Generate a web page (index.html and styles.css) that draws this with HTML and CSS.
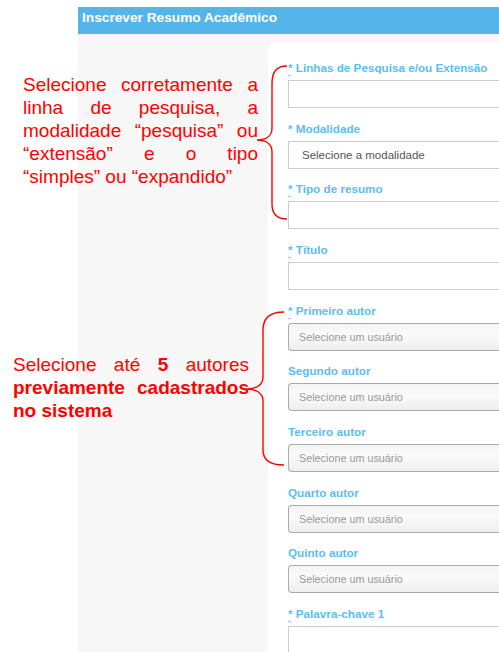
FILE: index.html
```html
<!DOCTYPE html>
<html lang="pt-BR">
<head>
  <meta charset="UTF-8">
  <title>Inscrever Resumo Acadêmico</title>
  <link rel="stylesheet" href="styles.css">
</head>
<body>
  <div class="page">
    <div class="panel-heading">Inscrever Resumo Acadêmico</div>
    <div class="panel-body">
      <form class="card">
        <div class="field">
          <label><abbr title="obrigatório">*</abbr> Linhas de Pesquisa e/ou Extensão</label>
          <div class="input"></div>
        </div>
        <div class="field">
          <label><span class="star">*</span> Modalidade</label>
          <div class="input select">Selecione a modalidade</div>
        </div>
        <div class="field">
          <label><abbr title="obrigatório">*</abbr> Tipo de resumo</label>
          <div class="input"></div>
        </div>
        <div class="field">
          <label><abbr title="obrigatório">*</abbr> Título</label>
          <div class="input"></div>
        </div>
        <div class="field">
          <label><abbr title="obrigatório">*</abbr> Primeiro autor</label>
          <div class="select2">Selecione um usuário</div>
        </div>
        <div class="field">
          <label>Segundo autor</label>
          <div class="select2">Selecione um usuário</div>
        </div>
        <div class="field">
          <label>Terceiro autor</label>
          <div class="select2">Selecione um usuário</div>
        </div>
        <div class="field">
          <label>Quarto autor</label>
          <div class="select2">Selecione um usuário</div>
        </div>
        <div class="field">
          <label>Quinto autor</label>
          <div class="select2">Selecione um usuário</div>
        </div>
        <div class="field">
          <label><abbr title="obrigatório">*</abbr> Palavra-chave 1</label>
          <div class="input"></div>
        </div>
      </form>
    </div>
  </div>

  <!-- anotações -->
  <p class="note note-1">Selecione corretamente a linha de pesquisa, a modalidade “pesquisa” ou “extensão” e o tipo “simples” ou “expandido”</p>
  <p class="note note-2">Selecione até <b>5</b> autores <b>previamente cadastrados no sistema</b></p>
  <svg class="braces" width="499" height="652" viewBox="0 0 499 652">
    <path d="M287 66 C276 66 272 72 272 84 L272 128 C272 136 266 140 257 140 C266 140 272 144 272 152 L272 204 C272 214 277 219 287 219" />
    <path d="M284 312 C270 312 263 318 263 330 L263 377 C263 385 256 389 247 389 C256 389 263 393 263 401 L263 450 C263 460 270 465 284 465" />
  </svg>
</body>
</html>
```

FILE: styles.css
```css
body {
  margin: 0;
  background: #fff;
  font-family: "Liberation Sans", Arial, sans-serif;
}

.page {
  margin-left: 78px;
  padding-top: 7px;
}

.panel-heading {
  background: #54b5ea;
  color: #fff;
  font-weight: bold;
  font-size: 13.7px;
  height: 27px;
  line-height: 21px;
  padding-left: 4px;
}

.panel-body {
  background: #f7f7f7;
  padding: 9px 0 0 190px;
  min-height: 620px;
}

.card {
  background: #fff;
  border-radius: 4px 0 0 0;
  padding: 17px 0 0 20px;
  min-height: 620px;
}

.field {
  margin-bottom: 12.67px;
}

label {
  display: block;
  color: #5bbdf0;
  font-weight: bold;
  font-size: 11.7px;
  line-height: 15px;
  margin-bottom: 5px;
}

abbr {
  text-decoration: underline dotted;
  text-underline-offset: 3px;
  cursor: help;
}

.input {
  height: 26px;
  border: 1px solid #ccc;
  border-right: none;
  background: #fff;
}

.input.select {
  color: #555;
  font-size: 11.5px;
  line-height: 26px;
  padding-left: 13px;
}

.select2 {
  height: 26px;
  border: 1px solid #aaa;
  border-right: none;
  border-radius: 4px 0 0 4px;
  background: linear-gradient(to top, #eee 0%, #fafafa 60%, #f4f4f4 100%);
  color: #999;
  font-size: 10.8px;
  line-height: 26px;
  padding-left: 10px;
}

.note {
  position: absolute;
  margin: 0;
  color: #ff0000;
  font-size: 19px;
  line-height: 23px;
  text-align: justify;
}

.note-1 {
  left: 23px;
  top: 73px;
  width: 235px;
}

.note-2 {
  left: 13px;
  top: 353px;
  width: 236px;
}

.braces {
  position: absolute;
  left: 0;
  top: 0;
  pointer-events: none;
}

.braces path {
  fill: none;
  stroke: #ff0000;
  stroke-width: 1.4;
}
```
